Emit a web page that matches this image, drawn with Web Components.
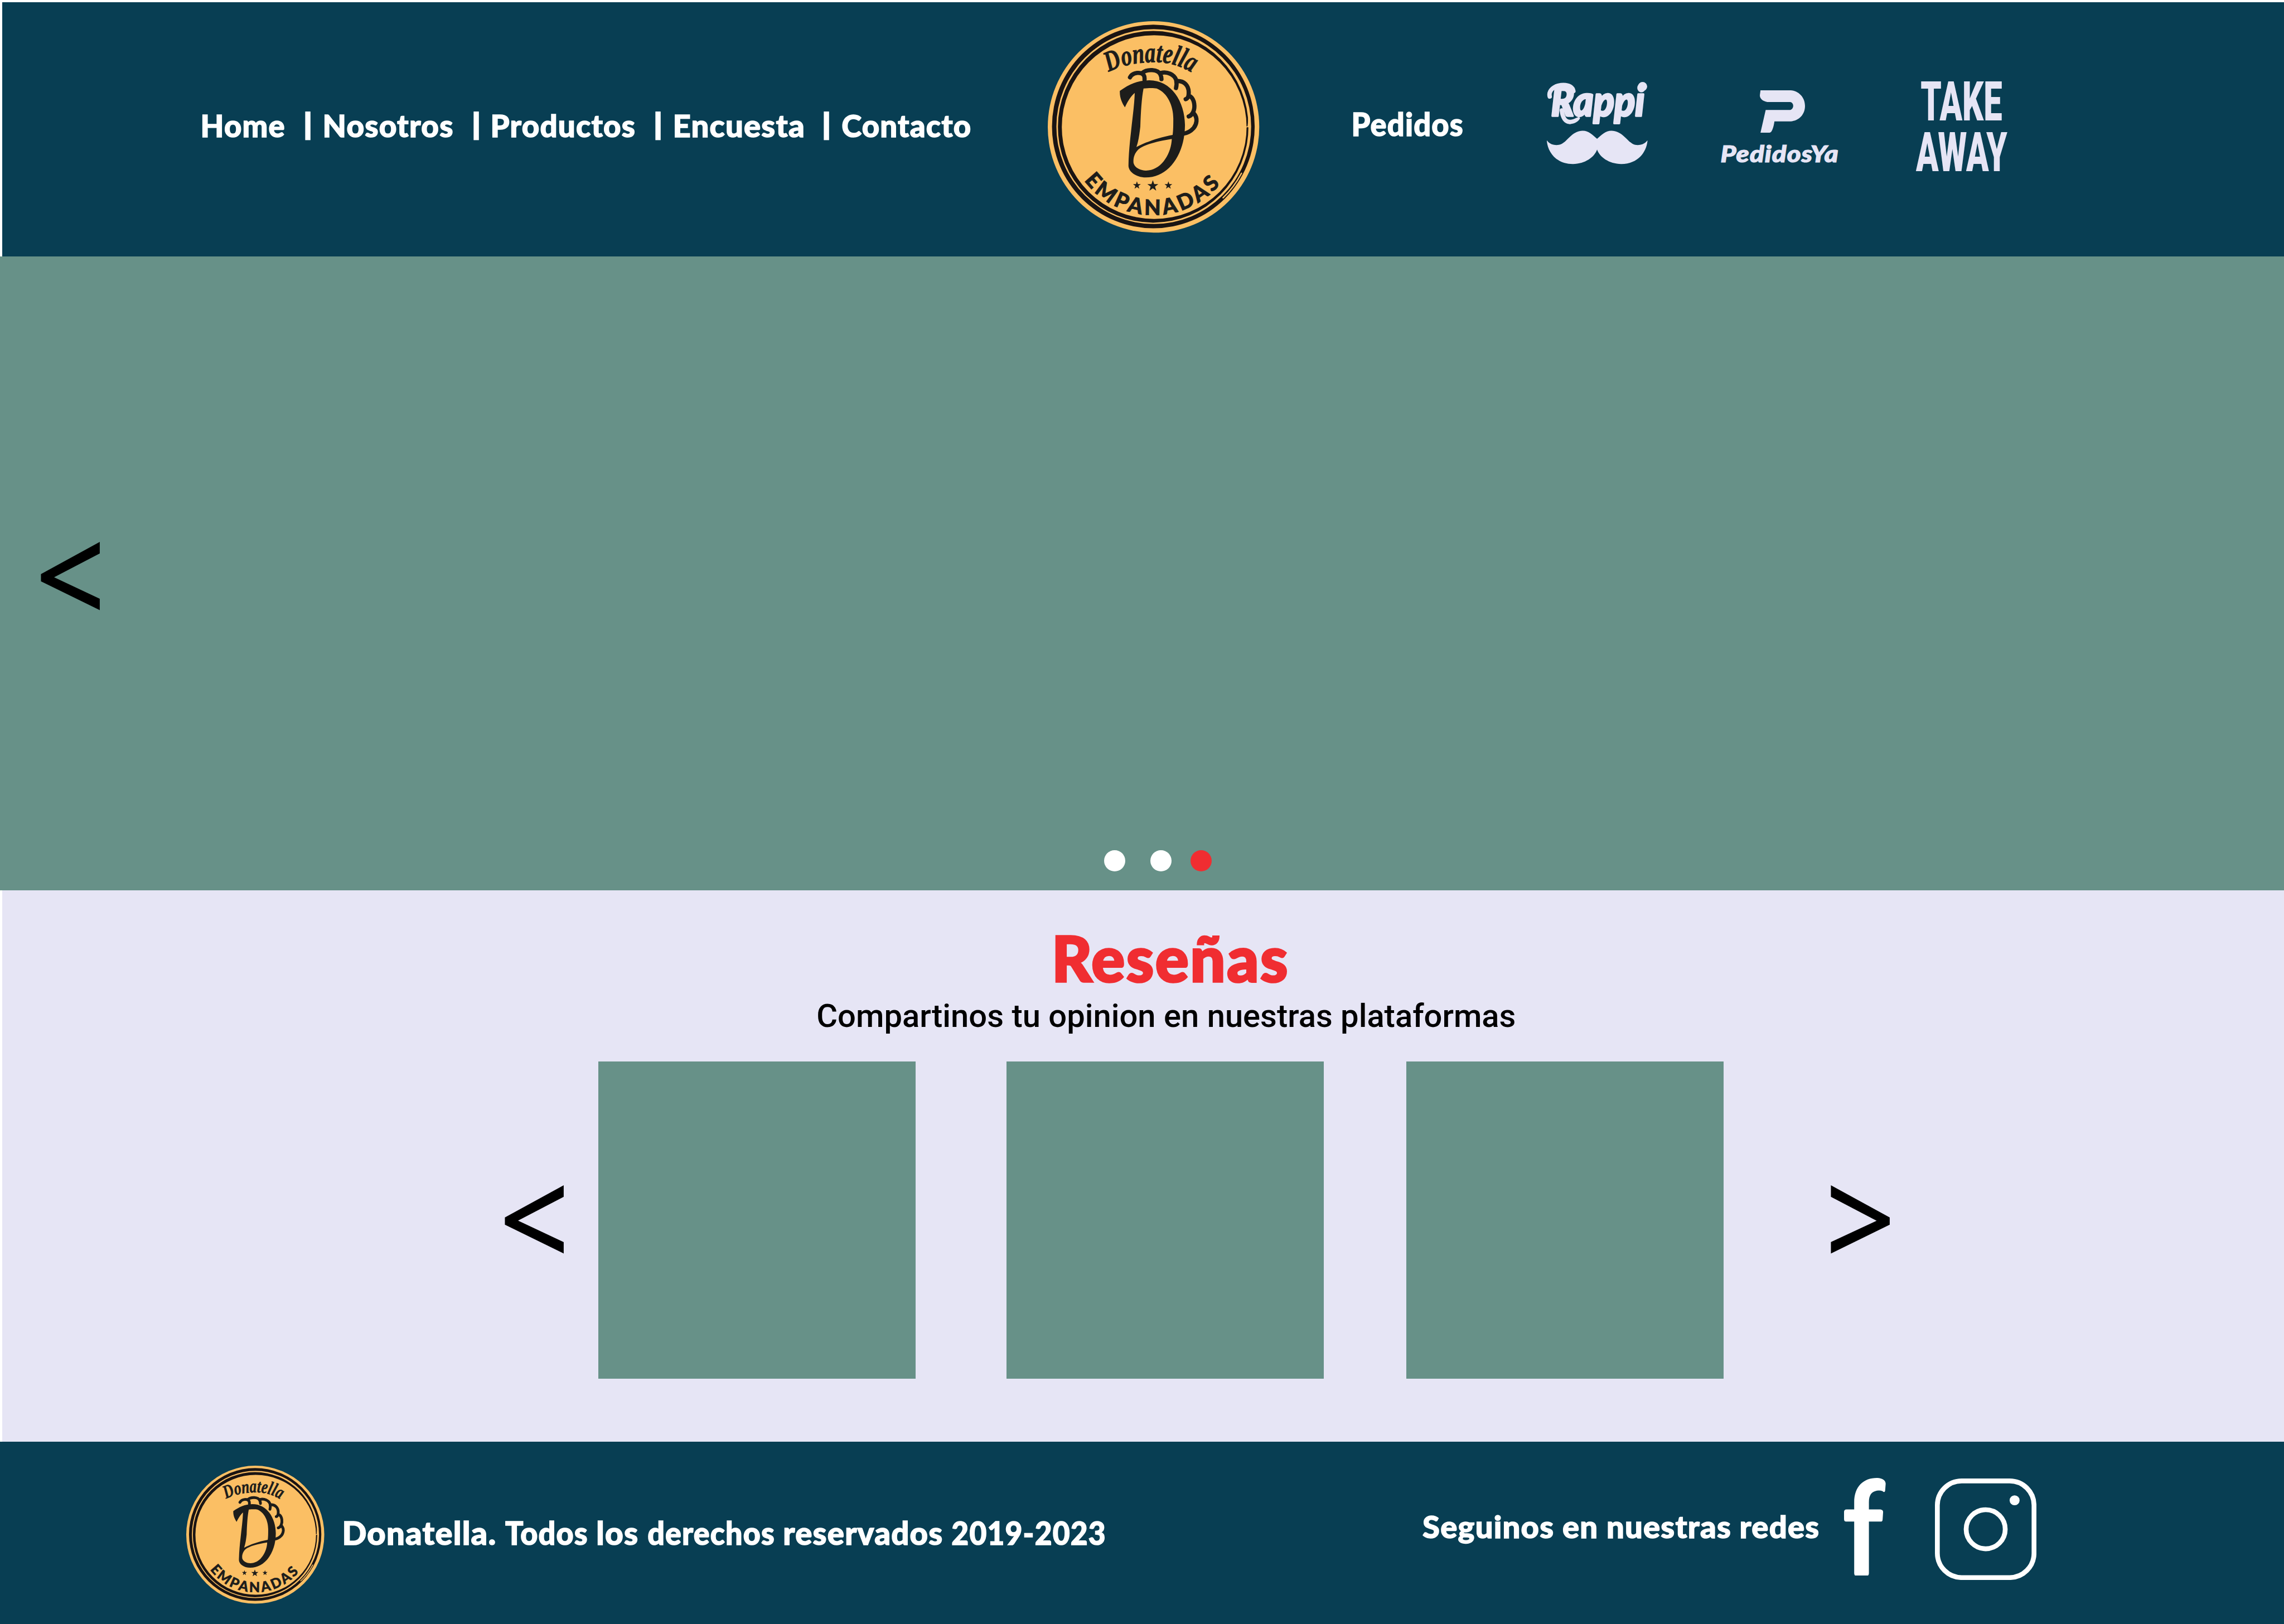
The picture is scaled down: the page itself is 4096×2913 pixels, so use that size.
<!DOCTYPE html>
<html lang="es">
<head>
<meta charset="utf-8">
<title>Donatella Empanadas</title>
<style>
/* 1rem = 100 design units on a 4500-unit-wide artboard */
html { font-size: calc(100vw / 45); overflow: hidden; background: #fff; }
body { margin: 0; font-family: Lato, "Open Sans", sans-serif; font-weight: 900; color: #fff; }
</style>
</head>
<body>
<donatella-page></donatella-page>
<script>
const define = (name, html, setup) => {
  const t = document.createElement('template');
  t.innerHTML = html;
  customElements.define(name, class extends HTMLElement {
    connectedCallback() {
      if (this.shadowRoot) return;
      this.attachShadow({ mode: 'open' }).append(document.importNode(t.content, true));
      if (setup) setup(this);
    }
  });
};

/* One line of text set to an exact width and cap height (or ink height). */
const ctx = document.createElement('canvas').getContext('2d');
define('fit-text', `
<style>
:host { display: block; flex: none; }
span { display: inline-block; white-space: pre; transform-origin: 0 50%; vertical-align: top; -webkit-text-stroke: var(--bolder, .026em) currentColor; paint-order: stroke fill; }
</style><span><slot></slot></span>`, el => {
  const u = innerWidth / 4500, w = el.getAttribute('w') * u, h = el.getAttribute('h') * u;
  const ink = el.hasAttribute('ink'), text = el.textContent, cs = getComputedStyle(el);
  const track = ink || !cs.fontFamily.startsWith('Lato') ? 0 : .022;
  ctx.font = `${cs.fontStyle} ${cs.fontWeight} 1000px ${cs.fontFamily}`;
  ctx.letterSpacing = '0px';
  const p = ctx.measureText(ink ? text : 'H');
  const size = h / (p.actualBoundingBoxAscent + (ink ? p.actualBoundingBoxDescent : 0)) * 1000;
  const m = ctx.measureText(text), k = size / 1000;
  const left = -m.actualBoundingBoxLeft * k;
  const right = m.actualBoundingBoxRight * k + track * size * (text.length - 1);
  const sx = w / (right - left);
  const base = ink ? h - p.actualBoundingBoxDescent * k : h;
  const natural = h / 2 + (m.fontBoundingBoxAscent - m.fontBoundingBoxDescent) * k / 2;
  el.style.width = w + 'px';
  el.style.height = h + 'px';
  const s = el.shadowRoot.querySelector('span');
  s.style.fontSize = size + 'px';
  s.style.letterSpacing = track + 'em';
  s.style.lineHeight = h + 'px';
  s.style.transform = `translate(${-left * sx}px, ${base - natural}px) scaleX(${sx})`;
});

define('brand-seal', `
<style>:host { display: block; flex: none; } svg { display: block; width: 100%; height: 100%; overflow: visible; }</style>
<svg viewBox="70 66 1250 1250">
  <defs>
    <path id="top" d="M430 368 Q 520 314 690 308 Q 830 304 948 388"/>
    <path id="bottom" d="M284 1007 A515 515 0 0 0 1098 1018"/>
    <path id="star" d="M0-1 .24-.32 .95-.31 .38 .12 .59 .81 0 .4 -.59 .81 -.38 .12 -.95-.31 -.24-.32Z"/>
  </defs>
  <circle cx="695" cy="691" r="625" fill="#fbbf64"/>
  <path fill="#1a1413" fill-rule="evenodd" d="M95 688.500a599 601.500 0 1 0 1198 0a599 601.500 0 1 0-1198 0ZM121 689a575.500 576 0 1 0 1151 0a575.500 576 0 1 0-1151 0Z"/>
  <path fill="#1a1413" fill-rule="evenodd" d="M130 690.500a563 566.500 0 1 0 1126 0a563 566.500 0 1 0-1126 0ZM153 692a546 543 0 1 0 1092 0a546 543 0 1 0-1092 0Z"/>
  <g stroke="#fbbf64" fill="none" stroke-linecap="round">
    <path stroke-width="7" d="M1257 600Q1260 650 1254 690"/>
    <path stroke-width="5" d="M1240 692L1257 688"/>
    <path stroke-width="8" d="M1106 1110Q1170 1050 1215 965"/>
    <path stroke-width="3" d="M290 285Q400 170 560 135M160 500Q205 360 300 275"/>
  </g>
  <g fill="#1d1d1b">
    <path fill-rule="evenodd" d="M496 478C550 440 600 416 670 415C800 415 880 540 881 680C880 860 780 990 650 990C590 990 547 955 547 920C548 850 555 780 562 720C570 640 582 560 584 490C560 510 540 545 526 575C510 550 494 520 496 478ZM636 464C670 460 700 461 714 464C780 490 812 570 812 640C812 680 812 710 808 738C730 752 650 780 594 810C608 770 612 730 617 690C620 600 625 520 636 464ZM803 762C720 775 640 795 605 825C580 850 574 880 577 905C585 935 620 949 650 949C740 950 800 850 803 762Z"/>
    <g fill="none" stroke="#1d1d1b" stroke-width="25" stroke-linecap="round">
      <path d="M556 398C572 368 625 362 639 388Q643 396 642 412"/>
      <path d="M629 372C655 348 722 348 736 382Q742 394 742 409"/>
      <path d="M738 372C775 362 818 380 829 414Q834 438 828 461"/>
      <path d="M835 420C875 418 902 445 903 485Q904 522 885 527"/>
      <path d="M914 512C938 530 942 575 930 602Q920 624 903 629"/>
      <path d="M935 613C958 640 950 675 932 698C914 718 890 729 868 732"/>
    </g>
    <text font-family="Liberation Serif, serif" font-style="italic" font-weight="700" font-size="170" stroke="#1d1d1b" stroke-width="3" stroke-linejoin="round"><textPath href="#top" textLength="514" lengthAdjust="spacingAndGlyphs">Donatella</textPath></text>
    <text font-family="Lato, sans-serif" font-weight="900" font-size="126" stroke="#1d1d1b" stroke-width="3"><textPath href="#bottom" textLength="925" lengthAdjust="spacing">EMPANADAS</textPath></text>
    <use href="#star" transform="translate(597 1037) scale(24)"/>
    <use href="#star" transform="translate(691 1040) scale(34)"/>
    <use href="#star" transform="translate(783 1037) scale(24)"/>
  </g>
</svg>`);

define('main-nav', `
<style>
:host { display: flex; align-items: center; height: .57rem; flex: none; }
.bar { font-family: "Open Sans"; font-weight: 700; --bolder: 0; }
</style>
<fit-text w="161" h="45">Home</fit-text>
<fit-text class="bar" ink w="12" h="58" style="margin-left:.41rem">|</fit-text>
<fit-text w="252" h="45" style="margin-left:.26rem">Nosotros</fit-text>
<fit-text class="bar" ink w="12" h="58" style="margin-left:.42rem">|</fit-text>
<fit-text w="280" h="45" style="margin-left:.25rem">Productos</fit-text>
<fit-text class="bar" ink w="12" h="58" style="margin-left:.405rem">|</fit-text>
<fit-text w="253" h="45" style="margin-left:.265rem">Encuesta</fit-text>
<fit-text class="bar" ink w="12" h="58" style="margin-left:.41rem">|</fit-text>
<fit-text w="252" h="45" style="margin-left:.25rem">Contacto</fit-text>`);

define('rappi-logo', `
<style>:host { display: block; flex: none; width: 1.98rem; height: 1.62rem; } svg { display: block; width: 100%; height: 100%; overflow: visible; }</style>
<svg viewBox="53 36 594 486" fill="#e6e5f5">
  <text x="78" y="236" font-family="Lato, sans-serif" font-style="italic" font-weight="900" font-size="250" textLength="554" lengthAdjust="spacingAndGlyphs" stroke="#e6e5f5" stroke-width="12" stroke-linejoin="round">Rappi</text>
  <path fill="none" stroke="#e6e5f5" stroke-width="26" stroke-linecap="round" d="M70 122C62 88 95 54 152 54C185 54 206 68 210 90M142 205C146 250 165 272 190 272"/>
  <path d="M178 262C200 262 225 250 240 244Q250 242 249 252C240 272 210 286 185 285Z"/>
  <circle cx="619" cy="63" r="27"/>
  <path d="M53 381C70 405 95 412 125 408C170 400 195 325 265 324C300 324 325 350 350 372C375 350 400 324 435 324C505 325 535 400 575 408C605 412 630 405 648 381C645 440 600 521 493 521C420 521 365 480 350 436C335 480 280 521 207 521C100 521 55 440 53 381Z"/>
</svg>`);

define('pedidosya-logo', `
<style>:host { display: flex; flex-direction: column; flex: none; width: 2.3rem; font-style: italic; color: #e6e5f5; --bolder: .03em; }
svg { display: block; width: .89rem; height: .835rem; margin: 0 0 .25rem .765rem; }</style>
<svg viewBox="733 175 139 250" preserveAspectRatio="none" fill="#e6e5f5">
  <path d="M735 175H828C852 178 872 215 872 267C872 320 852 355 828 358H778C775 395 770 424 763 425H735L751 291H826C839 286 839 247 826 244H756C742 240 733 225 733 205Z"/>
</svg>
<fit-text w="229" h="33.500">PedidosYa</fit-text>`);

define('take-away', `
<style>:host { display: block; flex: none; width: 1.8rem; height: 1.76rem; } svg { display: block; width: 100%; height: 100%; overflow: visible; }</style>
<svg viewBox="0 0 180 176" fill="#e6e5f5" font-family="Roboto, sans-serif" font-weight="900" font-size="107">
  <text><tspan x="9" y="76" textLength="161" lengthAdjust="spacingAndGlyphs">TAKE</tspan> <tspan x="0" y="176" textLength="180" lengthAdjust="spacingAndGlyphs">AWAY</tspan></text>
</svg>`);

define('site-header', `
<style>
:host { display: flex; box-sizing: border-box; height: 5.01rem; margin: .04rem 0 0 .04rem; padding-left: 3.95rem; background: #083e53; align-items: flex-start; }
main-nav { margin-top: 2.16rem; }
brand-seal { width: 4.167rem; height: 4.167rem; margin: .38rem 0 0 1.52rem; }
fit-text { margin: 2.19rem 0 0 1.853rem; }
rappi-logo { margin: 1.58rem 0 0 1.67rem; }
pedidosya-logo { margin: 1.74rem 0 0 1.455rem; }
take-away { margin: 1.58rem 0 0 1.535rem; }
</style>
<main-nav></main-nav><brand-seal></brand-seal><fit-text w="215" h="46">Pedidos</fit-text>
<rappi-logo></rappi-logo><pedidosya-logo></pedidosya-logo><take-away></take-away>`);

define('slide-arrow', `
<style>:host { display: block; flex: none; color: #000; font-family: "Open Sans", sans-serif; font-weight: 400; --bolder: .012em; }</style>
<i></i>`, el => {
  const n = document.createElement('fit-text');
  n.setAttribute('ink', ''); n.setAttribute('w', '116.5'); n.setAttribute('h', '133');
  n.textContent = el.getAttribute('dir') === 'next' ? '>' : '<';
  el.shadowRoot.querySelector('i').replaceWith(n);
});

define('hero-carousel', `
<style>
:host { display: flex; flex-direction: column; justify-content: space-between; box-sizing: border-box; height: 12.49rem; padding: 5.65rem 0 .37rem; background: #679188; }
slide-arrow { margin-left: .815rem; }
.dots { display: flex; margin-left: 21.75rem; }
i { width: .42rem; height: .42rem; border-radius: 50%; background: #fff; }
i + i { margin-left: .495rem; }
i.on { background: #f02d31; margin-left: .373rem; }
</style>
<slide-arrow></slide-arrow><div class="dots"><i></i><i></i><i class="on"></i></div>`);

define('review-card', `<style>:host { display: block; flex: none; width: 6.25rem; height: 6.25rem; background: #679188; }</style>`);

define('reviews-section', `
<style>
:host { display: flex; flex-direction: column; box-sizing: border-box; height: 10.875rem; margin-left: .04rem; padding-top: .92rem; background: #e6e5f5; }
.title { color: #f02d31; margin-left: 20.76rem; --bolder: .032em; }
.sub { color: #000; font-family: Roboto, sans-serif; font-weight: 500; margin: .43rem 0 0 16.08rem; --bolder: 0; }
.row { display: flex; align-items: center; margin: .665rem 0 0 9.91rem; }
review-card:nth-of-type(1) { margin-left: .675rem; }
review-card:nth-of-type(2) { margin-left: 1.79rem; }
review-card:nth-of-type(3) { margin-left: 1.63rem; margin-right: 2.12rem; }
</style>
<fit-text class="title" w="455" h="90">Reseñas</fit-text>
<fit-text class="sub" w="1373" h="46">Compartinos tu opinion en nuestras plataformas</fit-text>
<div class="row"><slide-arrow></slide-arrow><review-card></review-card><review-card></review-card><review-card></review-card><slide-arrow dir="next"></slide-arrow></div>`);

define('social-icons', `
<style>:host { display: flex; flex: none; } svg { display: block; } .fb { width: .83rem; height: 1.93rem; } .ig { width: 2rem; height: 2rem; margin: .02rem 0 0 .965rem; }</style>
<svg class="fb" viewBox="0 0 83 193" fill="#fff"><path d="M20 62V48C20 17 38 0 65 0Q82 1 82 12L81 25Q80 30 76 26Q71 24 65 25C54 27 49 34 49 48V62H72Q77 63 77 67L76 82Q76 86 72 86H49V188Q49 193 45 193H24Q20 193 20 188V86H4Q0 86 0 81V67Q0 62 5 62Z"/></svg>
<svg class="ig" viewBox="0 0 200 200" fill="none" stroke="#fff" stroke-width="9.500"><rect x="4.750" y="4.750" width="190.500" height="190.500" rx="48"/><circle cx="100" cy="100" r="38.500"/><circle cx="157" cy="43" r="9.800" fill="#fff" stroke="none"/></svg>`);

define('site-footer', `
<style>
:host { display: flex; align-items: flex-start; box-sizing: border-box; height: 3.6rem; padding-left: 3.67rem; background: #083e53; }
brand-seal { width: 2.72rem; height: 2.72rem; margin-top: .465rem; }
.copy { display: flex; gap: .21rem; margin: 1.575rem 0 0 .385rem; }
.follow { margin: 1.46rem 0 0 6.275rem; }
social-icons { margin: .705rem 0 0 .5rem; }
</style>
<brand-seal></brand-seal>
<div class="copy"><fit-text w="297" h="46">Donatella.</fit-text> <fit-text w="161" h="46">Todos</fit-text> <fit-text w="78" h="46">los</fit-text> <fit-text w="248" h="46">derechos</fit-text> <fit-text w="310" h="46">reservados</fit-text> <fit-text w="300" h="46">2019-2023</fit-text></div>
<fit-text class="follow" w="779" h="45">Seguinos en nuestras redes</fit-text>
<social-icons></social-icons>`);

define('donatella-page', `
<style>:host { display: flex; flex-direction: column; width: 45rem; height: 32rem; overflow: hidden; }
site-header, hero-carousel, reviews-section, site-footer { flex: none; }</style>
<site-header></site-header><hero-carousel></hero-carousel><reviews-section></reviews-section><site-footer></site-footer>`);
</script>
</body>
</html>
